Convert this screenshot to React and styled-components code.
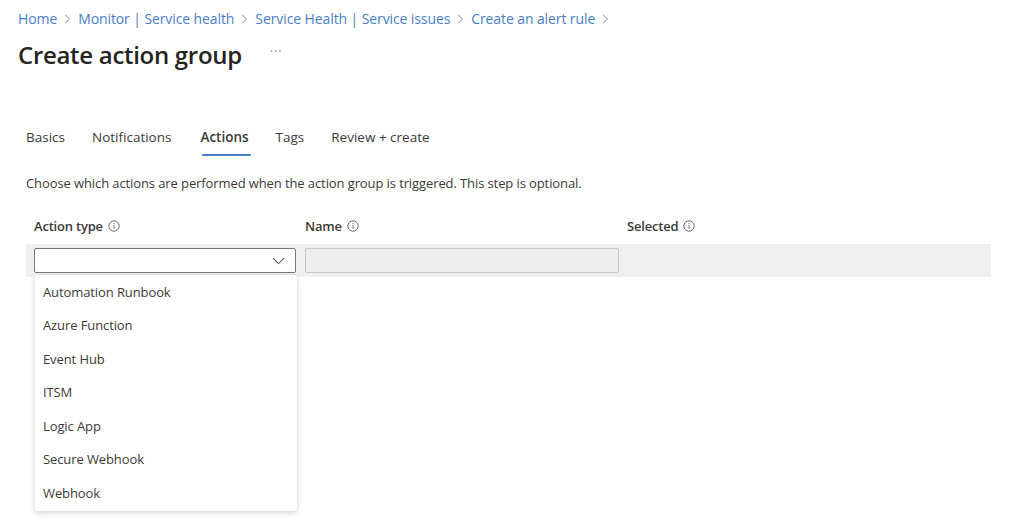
import React from "react";
import styled, { createGlobalStyle } from "styled-components";

const Global = createGlobalStyle`
  html, body { margin: 0; padding: 0; background: #ffffff; }
  body { font-family: "Open Sans", "Noto Sans", sans-serif; color: #323130; }
  * { box-sizing: border-box; }
`;

const Page = styled.div`
  width: 1024px;
  height: 531px;
  overflow: hidden;
  padding: 10px 0 0 18px;
`;

const Breadcrumb = styled.nav`
  display: flex;
  align-items: center;
  gap: 7px;
  font-size: 14px;
  line-height: 18px;
  letter-spacing: -0.1px;
`;

const Crumb = styled.span`
  color: #4a7ec4;
`;

const Sep = () => (
  <svg width="7" height="10" viewBox="0 0 7 10" fill="none">
    <path d="M1.2 1 L5.6 5 L1.2 9" stroke="#8a8886" strokeWidth="1" />
  </svg>
);

const TitleRow = styled.div`
  display: flex;
  align-items: center;
  gap: 28px;
  margin-top: 10px;
  height: 32px;
`;

const Title = styled.h1`
  margin: 0;
  font-size: 24px;
  font-weight: 600;
  color: #252423;
  letter-spacing: -0.3px;
`;

const More = styled.span`
  font-size: 12px;
  color: #8a8886;
  letter-spacing: 1px;
  margin-top: -6px;
`;

const Content = styled.div`
  padding-left: 8px;
  margin-top: 56px;
`;

const Tabs = styled.div`
  display: flex;
  gap: 27px;
  height: 28px;
`;

const Tab = styled.div`
  position: relative;
  font-size: 13.5px;
  line-height: 22px;
  color: #3b3a39;
  font-weight: ${(p) => (p.$active ? 600 : 400)};
  margin-left: ${(p) => (p.$active ? "2px" : "0")};
  &::after {
    content: "";
    display: ${(p) => (p.$active ? "block" : "none")};
    position: absolute;
    left: 2px;
    right: -2px;
    bottom: -2px;
    height: 2px;
    background: #4a7ec4;
    border-radius: 1px;
  }
`;

const Description = styled.p`
  margin: 20px 0 0;
  font-size: 13px;
  line-height: 18px;
  color: #3b3a39;
  letter-spacing: -0.1px;
`;

const Table = styled.div`
  margin-top: 21px;
  width: 965px;
`;

const HeaderRow = styled.div`
  display: grid;
  grid-template-columns: 271px 322px 1fr;
  padding-left: 8px;
  height: 26px;
  align-items: center;
`;

const HeaderCell = styled.div`
  display: flex;
  align-items: center;
  gap: 5px;
  font-size: 13px;
  font-weight: 600;
  color: #3b3a39;
  letter-spacing: -0.2px;
`;

const InfoIcon = () => (
  <svg width="12" height="12" viewBox="0 0 12 12" fill="none">
    <circle cx="6" cy="6" r="5.2" stroke="#605e5c" strokeWidth="0.9" />
    <line x1="6" y1="5.2" x2="6" y2="8.6" stroke="#605e5c" strokeWidth="0.9" />
    <circle cx="6" cy="3.6" r="0.6" fill="#605e5c" />
  </svg>
);

const DataRow = styled.div`
  position: relative;
  display: grid;
  grid-template-columns: 262px 314px 1fr;
  gap: 9px;
  align-items: center;
  height: 33px;
  margin-top: 5px;
  padding-left: 8px;
  background: #efefef;
`;

const SelectBox = styled.div`
  position: relative;
  height: 25px;
  background: #ffffff;
  border: 1px solid #7a7876;
  border-radius: 2px;
  display: flex;
  align-items: center;
  justify-content: flex-end;
  padding-right: 10px;
`;

const TextInput = styled.div`
  height: 25px;
  background: #ededed;
  border: 1.5px solid #c8c6c4;
  border-radius: 2px;
`;

const Menu = styled.ul`
  position: absolute;
  left: 0;
  top: 26px;
  width: 262px;
  margin: 0;
  padding: 0 0 1px;
  list-style: none;
  background: #ffffff;
  border-radius: 2px;
  box-shadow: 0 2px 6px rgba(0, 0, 0, 0.16), 0 0 2px rgba(0, 0, 0, 0.08);
  z-index: 2;
`;

const MenuItem = styled.li`
  height: 33.5px;
  display: flex;
  align-items: center;
  padding-left: 8px;
  font-size: 13px;
  color: #3b3a39;
  letter-spacing: -0.1px;
`;

const Chevron = () => (
  <svg width="13" height="8" viewBox="0 0 13 8" fill="none">
    <path d="M1 1.2 L6.5 6.6 L12 1.2" stroke="#605e5c" strokeWidth="1.1" />
  </svg>
);

const crumbs = [
  "Home",
  "Monitor | Service health",
  "Service Health | Service issues",
  "Create an alert rule",
];

const tabs = ["Basics", "Notifications", "Actions", "Tags", "Review + create"];

const options = [
  "Automation Runbook",
  "Azure Function",
  "Event Hub",
  "ITSM",
  "Logic App",
  "Secure Webhook",
  "Webhook",
];

export default function App() {
  return (
    <>
      <Global />
      <Page>
        <Breadcrumb>
          {crumbs.map((c) => (
            <React.Fragment key={c}>
              <Crumb>{c}</Crumb>
              <Sep />
            </React.Fragment>
          ))}
        </Breadcrumb>
        <TitleRow>
          <Title>Create action group</Title>
          <More>···</More>
        </TitleRow>
        <Content>
          <Tabs>
            {tabs.map((t) => (
              <Tab key={t} $active={t === "Actions"}>
                {t}
              </Tab>
            ))}
          </Tabs>
          <Description>
            Choose which actions are performed when the action group is triggered. This step is optional.
          </Description>
          <Table>
            <HeaderRow>
              <HeaderCell>
                Action type <InfoIcon />
              </HeaderCell>
              <HeaderCell>
                Name <InfoIcon />
              </HeaderCell>
              <HeaderCell>
                Selected <InfoIcon />
              </HeaderCell>
            </HeaderRow>
            <DataRow>
              <SelectBox>
                <Chevron />
                <Menu>
                  {options.map((o) => (
                    <MenuItem key={o}>{o}</MenuItem>
                  ))}
                </Menu>
              </SelectBox>
              <TextInput />
              <div />
            </DataRow>
          </Table>
        </Content>
      </Page>
    </>
  );
}
